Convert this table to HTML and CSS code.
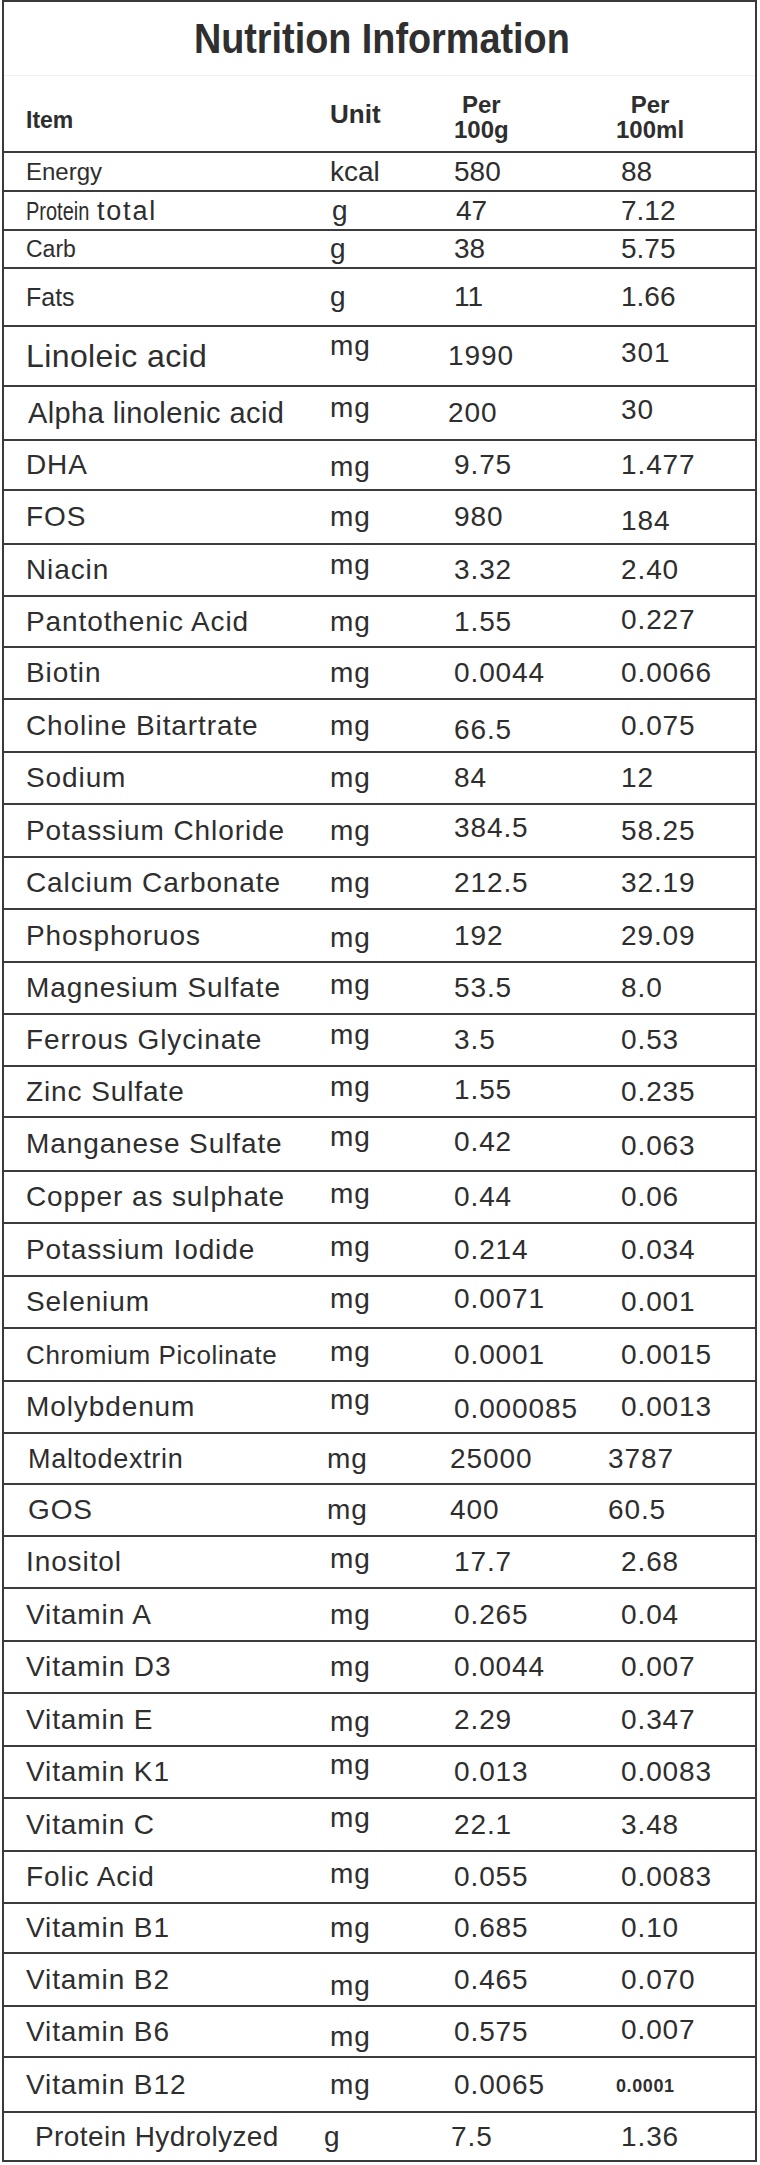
FILE: index.html
```html
<!DOCTYPE html>
<html lang="en">
<head>
<meta charset="utf-8">
<title>Nutrition Information</title>
<link rel="stylesheet" href="styles.css">
</head>
<body>
<div class="panel">
  <div class="title"><span class="title-text">Nutrition Information</span></div>
  <div class="row head">
    <div class="c1"><span class="h-item">Item</span></div>
    <div class="c2"><span class="h-unit">Unit</span></div>
    <div class="c3"><span class="h-per">Per<br>100g</span></div>
    <div class="c4"><span class="h-per h-ml">Per<br>100ml</span></div>
  </div>

  <div class="row h39 top"><div class="c1 f24">Energy</div><div class="c2">kcal</div><div class="c3">580</div><div class="c4">88</div></div>
  <div class="row h39 top"><div class="c1"><span class="narrow">Protein</span> <span class="wide">total</span></div><div class="c2 r2">g</div><div class="c3 r2">47</div><div class="c4">7.12</div></div>
  <div class="row h38 top"><div class="c1 f23">Carb</div><div class="c2">g</div><div class="c3">38</div><div class="c4">5.75</div></div>
  <div class="row h58 top"><div class="c1 f25">Fats</div><div class="c2">g</div><div class="c3">11</div><div class="c4">1.66</div></div>
  <div class="row h60"><div class="c1 f32">Linoleic acid</div><div class="c2 up10">mg</div><div class="c3 l6">1990</div><div class="c4 up3">301</div></div>
  <div class="row h54"><div class="c1 f29 r2">Alpha linolenic acid</div><div class="c2 up5">mg</div><div class="c3 l6">200</div><div class="c4 up3">30</div></div>
  <div class="row h50"><div class="c1">DHA</div><div class="c2 dn2">mg</div><div class="c3">9.75</div><div class="c4">1.477</div></div>
  <div class="row h54"><div class="c1">FOS</div><div class="c2">mg</div><div class="c3">980</div><div class="c4 dn4">184</div></div>
  <div class="row h52"><div class="c1">Niacin</div><div class="c2 up5">mg</div><div class="c3">3.32</div><div class="c4">2.40</div></div>
  <div class="row h51"><div class="c1">Pantothenic Acid</div><div class="c2">mg</div><div class="c3">1.55</div><div class="c4 up2">0.227</div></div>
  <div class="row h52"><div class="c1">Biotin</div><div class="c2">mg</div><div class="c3">0.0044</div><div class="c4">0.0066</div></div>
  <div class="row h53"><div class="c1">Choline Bitartrate</div><div class="c2">mg</div><div class="c3 dn4">66.5</div><div class="c4">0.075</div></div>
  <div class="row h52"><div class="c1">Sodium</div><div class="c2">mg</div><div class="c3">84</div><div class="c4">12</div></div>
  <div class="row h53"><div class="c1">Potassium Chloride</div><div class="c2">mg</div><div class="c3 up3">384.5</div><div class="c4">58.25</div></div>
  <div class="row h52"><div class="c1">Calcium Carbonate</div><div class="c2">mg</div><div class="c3">212.5</div><div class="c4">32.19</div></div>
  <div class="row h53"><div class="c1">Phosphoruos</div><div class="c2 dn2">mg</div><div class="c3">192</div><div class="c4">29.09</div></div>
  <div class="row h52"><div class="c1">Magnesium Sulfate</div><div class="c2 up3">mg</div><div class="c3">53.5</div><div class="c4">8.0</div></div>
  <div class="row h52"><div class="c1">Ferrous Glycinate</div><div class="c2 up5">mg</div><div class="c3">3.5</div><div class="c4">0.53</div></div>
  <div class="row h51"><div class="c1">Zinc Sulfate</div><div class="c2 up5">mg</div><div class="c3 up2">1.55</div><div class="c4">0.235</div></div>
  <div class="row h54"><div class="c1">Manganese Sulfate</div><div class="c2 up7">mg</div><div class="c3 up2">0.42</div><div class="c4 dn2">0.063</div></div>
  <div class="row h52"><div class="c1">Copper as sulphate</div><div class="c2 up3">mg</div><div class="c3">0.44</div><div class="c4">0.06</div></div>
  <div class="row h53"><div class="c1">Potassium Iodide</div><div class="c2 up3">mg</div><div class="c3">0.214</div><div class="c4">0.034</div></div>
  <div class="row h52"><div class="c1">Selenium</div><div class="c2 up3">mg</div><div class="c3 up3">0.0071</div><div class="c4">0.001</div></div>
  <div class="row h53"><div class="c1 f26">Chromium Picolinate</div><div class="c2 up3">mg</div><div class="c3">0.0001</div><div class="c4">0.0015</div></div>
  <div class="row h52"><div class="c1">Molybdenum</div><div class="c2 up7">mg</div><div class="c3 dn2">0.000085</div><div class="c4">0.0013</div></div>
  <div class="row h51"><div class="c1 r2 f27">Maltodextrin</div><div class="c2 l3">mg</div><div class="c3 l4">25000</div><div class="c4 l13">3787</div></div>
  <div class="row h52"><div class="c1 r2">GOS</div><div class="c2 l3">mg</div><div class="c3 l4">400</div><div class="c4 l13">60.5</div></div>
  <div class="row h52"><div class="c1">Inositol</div><div class="c2 up3">mg</div><div class="c3">17.7</div><div class="c4">2.68</div></div>
  <div class="row h53"><div class="c1">Vitamin A</div><div class="c2">mg</div><div class="c3">0.265</div><div class="c4">0.04</div></div>
  <div class="row h52"><div class="c1">Vitamin D3</div><div class="c2">mg</div><div class="c3">0.0044</div><div class="c4">0.007</div></div>
  <div class="row h53"><div class="c1">Vitamin E</div><div class="c2 dn2">mg</div><div class="c3">2.29</div><div class="c4">0.347</div></div>
  <div class="row h52"><div class="c1">Vitamin K1</div><div class="c2 up7">mg</div><div class="c3">0.013</div><div class="c4">0.0083</div></div>
  <div class="row h53"><div class="c1">Vitamin C</div><div class="c2 up7">mg</div><div class="c3">22.1</div><div class="c4">3.48</div></div>
  <div class="row h52"><div class="c1">Folic Acid</div><div class="c2 up3">mg</div><div class="c3">0.055</div><div class="c4">0.0083</div></div>
  <div class="row h50"><div class="c1">Vitamin B1</div><div class="c2">mg</div><div class="c3">0.685</div><div class="c4">0.10</div></div>
  <div class="row h53"><div class="c1">Vitamin B2</div><div class="c2 dn6">mg</div><div class="c3">0.465</div><div class="c4">0.070</div></div>
  <div class="row h51"><div class="c1">Vitamin B6</div><div class="c2 dn5">mg</div><div class="c3">0.575</div><div class="c4 up2">0.007</div></div>
  <div class="row h55"><div class="c1">Vitamin B12</div><div class="c2">mg</div><div class="c3">0.0065</div><div class="c4 l5"><span class="tiny">0.0001</span></div></div>
  <div class="row last"><div class="c1 r9 tight">Protein Hydrolyzed</div><div class="c2 l6">g</div><div class="c3 l3">7.5</div><div class="c4">1.36</div></div>
</div>
</body>
</html>
```

FILE: styles.css
```css
html, body {
  margin: 0;
  padding: 0;
  background: #ffffff;
}

body {
  width: 760px;
  height: 2165px;
  font-family: "Liberation Sans", Arial, sans-serif;
  color: #2e2e2e;
}

.panel {
  width: 755px;
  margin-left: 2px;
  box-sizing: border-box;
  border: 2px solid #3a3a3a;
}

.title {
  height: 74px;
  box-sizing: border-box;
  padding-top: 16px;
  padding-left: 5px;
  text-align: center;
  border-bottom: 1px solid #f1f1f1;
}

.title-text {
  display: inline-block;
  font-weight: bold;
  font-size: 42px;
  line-height: 42px;
  color: #2f2f2f;
  transform: scaleX(0.9);
}

.row {
  display: grid;
  grid-template-columns: 326px 124px 167px 1fr;
  align-items: center;
  box-sizing: border-box;
  border-bottom: 2px solid #3c3c3c;
  font-size: 28px;
  letter-spacing: 0.9px;
  line-height: 32px;
}

.row > div {
  white-space: nowrap;
  box-sizing: border-box;
}

.c1 { padding-left: 22px; }

/* header */
.head {
  height: 77px;
  align-items: start;
  letter-spacing: 0;
}
.h-item {
  display: inline-block;
  padding-top: 33px;
  font-weight: bold;
  font-size: 23px;
  line-height: 23px;
}
.h-unit {
  display: inline-block;
  padding-top: 25px;
  font-weight: bold;
  font-size: 26px;
  line-height: 26px;
}
.h-per {
  display: inline-block;
  padding-top: 16px;
  text-align: center;
  font-weight: bold;
  font-size: 24px;
  line-height: 25px;
}
.h-ml { margin-left: -5px; }

/* row heights */
.h38 { height: 38px; }
.h39 { height: 39px; }
.h50 { height: 50px; }
.h51 { height: 51px; }
.h52 { height: 52px; }
.h53 { height: 53px; }
.h54 { height: 54px; }
.h55 { height: 55px; }
.h58 { height: 58px; }
.h60 { height: 60px; }
.last { height: 47px; border-bottom: none; }

/* text sizes */
.top { letter-spacing: 0; font-size: 28px; }
.f23 { font-size: 23px; }
.f24 { font-size: 24px; }
.f25 { font-size: 25px; }
.f26 { font-size: 26px; letter-spacing: 0.6px; }
.f27 { font-size: 27px; letter-spacing: 0.7px; }
.f29 { font-size: 29px; letter-spacing: 0.4px; }
.f32 { font-size: 32px; letter-spacing: 0.4px; }
.tight { letter-spacing: 0.4px; }

.narrow {
  display: inline-block;
  font-size: 25px;
  transform: scaleX(0.8);
  transform-origin: left center;
  margin-right: -16px;
}
.wide {
  font-size: 27px;
  letter-spacing: 1.8px;
}

.tiny {
  font-weight: bold;
  font-size: 18px;
  letter-spacing: 0.6px;
}

/* vertical nudges */
.up2 { padding-bottom: 4px; }
.up3 { padding-bottom: 6px; }
.up5 { padding-bottom: 10px; }
.up7 { padding-bottom: 14px; }
.up10 { padding-bottom: 20px; }
.dn2 { padding-top: 4px; }
.dn4 { padding-top: 8px; }
.dn5 { padding-top: 10px; }
.dn6 { padding-top: 12px; }

/* horizontal nudges */
.l3 { margin-left: -3px; }
.l4 { margin-left: -4px; }
.l5 { margin-left: -5px; }
.l6 { margin-left: -6px; }
.l13 { margin-left: -13px; }
.r2 { padding-left: 24px; }
.c2.r2, .c3.r2 { padding-left: 2px; }
.r9 { padding-left: 31px; }
```
